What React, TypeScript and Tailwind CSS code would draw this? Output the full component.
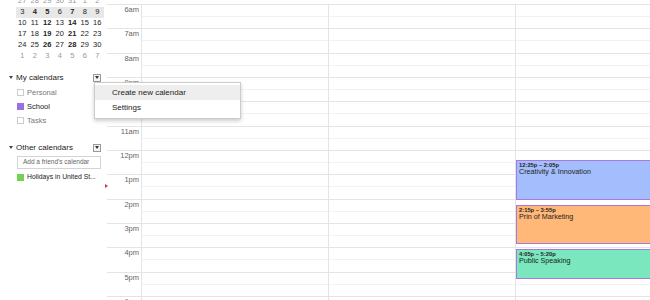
const weeks = [
  ["27", "28", "29", "30", "31", "1", "2"],
  ["3", "4", "5", "6", "7", "8", "9"],
  ["10", "11", "12", "13", "14", "15", "16"],
  ["17", "18", "19", "20", "21", "22", "23"],
  ["24", "25", "26", "27", "28", "29", "30"],
  ["1", "2", "3", "4", "5", "6", "7"],
];
const bold = ["4", "5", "7", "12", "14", "19", "21", "26", "28"];
const hours = ["6am", "7am", "8am", "9am", "10am", "11am", "12pm", "1pm", "2pm", "3pm", "4pm", "5pm", "6pm"];

function MiniCal() {
  return (
    <div className="pl-[16px] pr-[3px] -mt-[4.5px]">
      {weeks.map((w, i) => {
        const other = i === 0 || i === 5;
        return (
          <div key={i} className={`flex h-[11px] items-center ${i === 1 ? "bg-[#e8e8e8]" : ""}`}>
            {w.map((d, j) => (
              <div
                key={j}
                className={`w-[12.5px] text-center text-[7.5px] ${other ? "text-[#999]" : "text-[#222]"} ${!other && bold.includes(d) ? "font-bold" : ""}`}
              >
                {d}
              </div>
            ))}
          </div>
        );
      })}
    </div>
  );
}

function DropBtn() {
  return (
    <div className="w-[8px] h-[8px] border border-[#999] bg-[#f4f4f4] flex items-center justify-center">
      <div className="w-0 h-0 border-l-[2.5px] border-r-[2.5px] border-t-[3px] border-l-transparent border-r-transparent border-t-[#333]" />
    </div>
  );
}

function Header({ label }: { label: string }) {
  return (
    <div className="flex items-center h-[12px] pl-[9px] pr-[6px]">
      <div className="w-0 h-0 border-l-[2.5px] border-r-[2.5px] border-t-[3px] border-l-transparent border-r-transparent border-t-[#444] mr-[3px]" />
      <span className="text-[8px] text-[#222] flex-1">{label}</span>
      <DropBtn />
    </div>
  );
}

function CalItem({ label, color, muted, small }: { label: string; color?: string; muted?: boolean; small?: boolean }) {
  return (
    <div className="flex items-center h-[14px] pl-[17px]">
      <div className={`w-[7px] h-[7px] mr-[3px] shrink-0 ${color ?? "border border-[#ccc] bg-white"}`} />
      <span className={`${small ? "text-[6.8px]" : "text-[7.5px]"} whitespace-nowrap ${muted ? "text-[#777]" : "text-[#222]"}`}>{label}</span>
    </div>
  );
}

function Sidebar() {
  return (
    <div className="w-[107px] shrink-0 relative">
      <MiniCal />
      <div className="mt-[10px]">
        <Header label="My calendars" />
        <div className="mt-[2px]">
          <CalItem label="Personal" muted />
          <CalItem label="School" color="bg-[#9a72e0]" />
          <CalItem label="Tasks" muted />
        </div>
      </div>
      <div className="mt-[14px]">
        <Header label="Other calendars" />
        <div className="ml-[17px] mr-[6px] mt-[2px] h-[13px] border border-[#d4d4d4] flex items-center px-[5px]">
          <span className="text-[6.5px] text-[#666]">Add a friend's calendar</span>
        </div>
        <div className="mt-[2px]">
          <CalItem label="Holidays in United St..." color="bg-[#73d24f]" small />
        </div>
      </div>
      <div className="absolute left-[105px] top-[184px] w-0 h-0 border-t-[2.5px] border-b-[2.5px] border-l-[3px] border-t-transparent border-b-transparent border-l-[#d33]" />
    </div>
  );
}

const HOUR = 24.33;
const events = [
  { start: 6 + 25 / 60, end: 8 + 5 / 60, time: "12:25p – 2:05p", title: "Creativity & Innovation", bg: "bg-[#a4bdfc]" },
  { start: 8.25, end: 9 + 55 / 60, time: "2:15p – 3:55p", title: "Prin of Marketing", bg: "bg-[#ffb878]" },
  { start: 10 + 5 / 60, end: 11 + 20 / 60, time: "4:05p – 5:20p", title: "Public Speaking", bg: "bg-[#7ae7bf]" },
];

function Grid() {
  return (
    <div className="flex-1 overflow-hidden relative">
      <div className="flex mt-[4px]">
        <div className="w-[34px] shrink-0">
          {hours.map((h) => (
            <div key={h} className="h-[24.33px] border-t border-[#e4e4e4] text-right pr-[2px]">
              <span className="text-[7.5px] text-[#666] leading-none block pt-[1px]">{h}</span>
            </div>
          ))}
        </div>
        {[0, 1, 2].map((c) => (
          <div key={c} className="w-[187px] shrink-0 border-l border-[#e4e4e4] relative">
            {hours.map((h) => (
              <div key={h} className="h-[24.33px] border-t border-[#e4e4e4]">
                <div className="h-[12px] border-b border-[#f2f2f2]" />
              </div>
            ))}
            {c === 2 &&
              events.map((e) => (
                <div
                  key={e.title}
                  className={`absolute left-0 right-0 border border-[#a47ae2] ${e.bg} px-[2px] pt-[1px]`}
                  style={{ top: e.start * HOUR, height: (e.end - e.start) * HOUR - 1 }}
                >
                  <div className="text-[5.8px] font-bold text-[#1d1d1d] leading-[6px]">{e.time}</div>
                  <div className="text-[7.2px] text-[#1d1d1d] leading-[8px]">{e.title}</div>
                </div>
              ))}
          </div>
        ))}
      </div>
    </div>
  );
}

export default function App() {
  return (
    <div className="w-[650px] h-[300px] overflow-hidden bg-white flex relative font-['Liberation_Sans',Arial,sans-serif]">
      <Sidebar />
      <Grid />
      <div className="absolute left-[94px] top-[82px] w-[147px] bg-white border border-[#ccc] shadow-[0_2px_4px_rgba(0,0,0,0.2)] py-[2px]">
        <div className="h-[15px] bg-[#eeeeee] flex items-center pl-[17px] text-[8px] text-[#222]">Create new calendar</div>
        <div className="h-[16px] flex items-center pl-[17px] text-[8px] text-[#222]">Settings</div>
      </div>
    </div>
  );
}
